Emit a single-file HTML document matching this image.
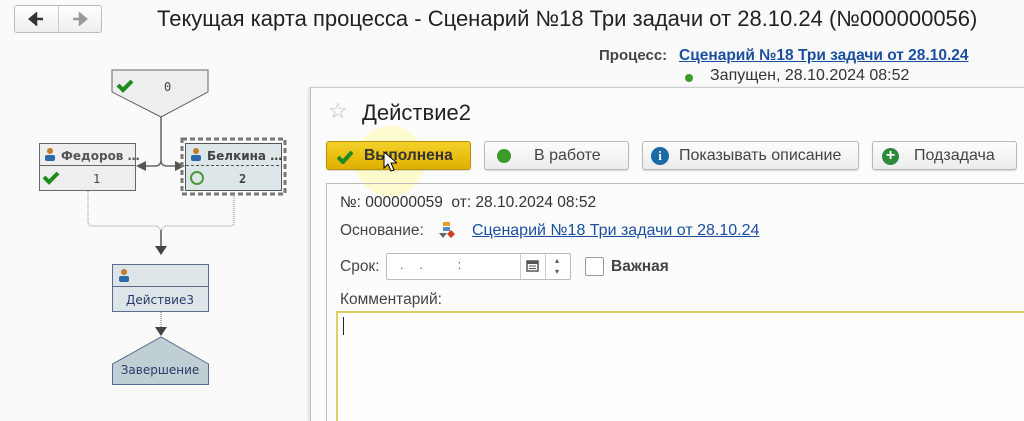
<!DOCTYPE html>
<html><head><meta charset="utf-8"><style>
html,body{margin:0;width:1024px;height:421px;overflow:hidden}
body{background:#fafafa;font-family:"Liberation Sans",sans-serif;position:relative;color:#333}
.a{position:absolute;white-space:nowrap}
.btn{position:absolute;height:29px;border:1px solid #b8b8b8;border-radius:3px;background:linear-gradient(#fdfdfd,#ececec);font-size:16px;color:#444;box-sizing:border-box;line-height:27px;box-shadow:0 1px 1px rgba(0,0,0,.15)}
</style></head><body>
<!-- nav -->
<div class="a" style="left:14px;top:5px;width:88px;height:28px;border:1px solid #bbb;border-radius:3px;background:linear-gradient(#fff,#eee);box-sizing:border-box"></div>
<div class="a" style="left:58px;top:6px;width:1px;height:26px;background:#ccc"></div>
<svg class="a" style="left:28px;top:12px" width="16" height="14"><path d="M15 7H5M8 2L2 7l6 5z" stroke="#333" stroke-width="2.5" fill="#333"/></svg>
<svg class="a" style="left:72px;top:12px" width="16" height="14"><path d="M1 7h10M8 2l6 5-6 5z" stroke="#999" stroke-width="2.5" fill="#999"/></svg>
<div class="a" style="left:157px;top:6px;font-size:22px;color:#222">Текущая карта процесса - Сценарий №18 Три задачи от 28.10.24 (№000000056)</div>
<div class="a" style="left:599px;top:47px;font-size:15px;font-weight:bold;color:#444">Процесс:</div>
<div class="a" style="left:679px;top:47px;font-size:15.5px;font-weight:bold;color:#1a4fa0;text-decoration:underline">Сценарий №18 Три задачи от 28.10.24</div>
<div class="a" style="left:685px;top:74px;width:8px;height:8px;border-radius:50%;background:#3a9a2a"></div>
<div class="a" style="left:710px;top:67px;font-size:16px;color:#333">Запущен, 28.10.2024 08:52</div>
<div class="a" style="left:590px;top:88px;width:434px;height:1px;background:#ccc"></div>

<!-- diagram -->
<svg class="a" style="left:0;top:0" width="310" height="421">
<path d="M112 70H208V92L161 117L112 92Z" fill="#eee" stroke="#666"/>
<path d="M118 85l5 5 9-9" stroke="#1d8a1d" stroke-width="4" fill="none"/>
<text x="164" y="91" font-family="DejaVu Sans Mono" font-size="12" fill="#444">0</text>
<path d="M161 117V160M161 160q0 6-6 6H145M161 160q0 6 6 6H178" stroke="#666" fill="none" stroke-width="1.5"/>
<path d="M136 166l10-5v10z" fill="#555"/><path d="M185 166l-10-5v10z" fill="#555"/>
<rect x="39.5" y="143.5" width="96" height="47" fill="#eee" stroke="#666"/>
<line x1="40" y1="165.5" x2="135" y2="165.5" stroke="#666"/>
<circle cx="50" cy="151" r="3" fill="#c47a2a"/><rect x="45" y="155" width="10" height="6" rx="2" fill="#2a6aa8"/>
<text x="61" y="160" font-family="DejaVu Sans" font-size="12" font-weight="bold" fill="#555">Федоров …</text>
<path d="M44 177l5 5 9-9" stroke="#1d8a1d" stroke-width="4" fill="none"/>
<text x="93" y="183" font-family="DejaVu Sans Mono" font-size="12" fill="#444">1</text>
<rect x="182" y="139" width="103" height="55" fill="none" stroke="#777" stroke-width="3" stroke-dasharray="5 3"/>
<rect x="185.5" y="143.5" width="96" height="47" fill="#dde6e8" stroke="#555"/>
<line x1="186" y1="165.5" x2="281" y2="165.5" stroke="#555" stroke-dasharray="3 2"/>
<circle cx="196" cy="151" r="3" fill="#c47a2a"/><rect x="191" y="155" width="10" height="6" rx="2" fill="#2a6aa8"/>
<text x="207" y="160" font-family="DejaVu Sans" font-size="12" font-weight="bold" fill="#444">Белкина …</text>
<circle cx="197" cy="178" r="6" fill="none" stroke="#4a9a3a" stroke-width="2"/>
<text x="239" y="183" font-family="DejaVu Sans Mono" font-size="12" font-weight="bold" fill="#444">2</text>
<path d="M88 191V222q0 4 4 4H157l4 4 4-4H230q4 0 4-4V194" stroke="#888" fill="none" stroke-dasharray="1 1"/>
<path d="M161 230V250" stroke="#555" stroke-width="1.5"/><path d="M155 246h12l-6 9z" fill="#444"/>
<rect x="112.5" y="264.5" width="96" height="47" fill="#dde5e8" stroke="#5a6a90"/>
<line x1="113" y1="286.5" x2="208" y2="286.5" stroke="#5a6a90"/>
<circle cx="124" cy="272" r="3" fill="#c47a2a"/><rect x="119" y="276" width="10" height="6" rx="2" fill="#2a6aa8"/>
<text x="160" y="304" text-anchor="middle" font-family="DejaVu Sans" font-size="12" fill="#2a3a6a">Действие3</text>
<path d="M161 312V330" stroke="#666" stroke-dasharray="1 1"/><path d="M155 327h12l-6 9z" fill="#444"/>
<path d="M112.5 384.5V364L161 337L208.5 364V384.5Z" fill="#bfcfd4" stroke="#5a6a90"/>
<text x="160" y="374" text-anchor="middle" font-family="DejaVu Sans" font-size="12" fill="#2a3a6a">Завершение</text>
</svg>

<!-- dialog -->
<div class="a" style="left:310px;top:87px;width:714px;height:334px;background:#fcfcfc;border-left:1px solid #bbb;border-top:1px solid #ccc;box-shadow:-2px 0 3px rgba(0,0,0,.1)"></div>
<div class="a" style="left:328px;top:98px;font-size:22px;color:#bbb">☆</div>
<div class="a" style="left:362px;top:100px;font-size:22px;color:#222">Действие2</div>
<div class="a" style="left:355px;top:126px;width:70px;height:70px;border-radius:50%;background:rgba(255,250,160,.5)"></div>
<div class="btn" style="left:326px;top:141px;width:145px;background:linear-gradient(#f3d12a,#e0b000);border-color:#b8920a;font-weight:bold;color:#333;font-size:15.5px"><svg style="position:absolute;left:10px;top:8px" width="16" height="14"><path d="M1 7l5 5 9-10" stroke="#1d8a1d" stroke-width="4" fill="none"/></svg><span style="position:absolute;left:37px">Выполнена</span></div>
<div class="btn" style="left:484px;top:141px;width:145px"><span style="position:absolute;left:12px;top:7px;width:14px;height:14px;border-radius:50%;background:#3a9a2a"></span><span style="position:absolute;left:49px">В работе</span></div>
<div class="btn" style="left:642px;top:141px;width:217px"><span style="position:absolute;left:8px;top:5px;width:18px;height:18px;border-radius:50%;background:#1a6aa8;color:#fff;font-weight:bold;font-size:13px;line-height:18px;text-align:center;font-family:'Liberation Serif',serif">i</span><span style="position:absolute;left:36px">Показывать описание</span></div>
<div class="btn" style="left:872px;top:141px;width:145px"><span style="position:absolute;left:9px;top:6px;width:17px;height:17px;border-radius:50%;background:#2e8a3a;color:#fff;font-weight:bold;font-size:16px;line-height:16px;text-align:center">+</span><span style="position:absolute;left:41px">Подзадача</span></div>
<div class="a" style="left:326px;top:183px;width:698px;height:238px;border-left:1px solid #bbb;border-top:1px solid #bbb"></div>
<div class="a" style="left:340px;top:194px;font-size:15.5px;color:#333">№: 000000059 &nbsp;от: 28.10.2024 08:52</div>
<div class="a" style="left:340px;top:222px;font-size:15.5px;color:#444">Основание:</div>
<svg class="a" style="left:437px;top:221px" width="22" height="20"><rect x="6" y="1" width="7" height="4" fill="#e0a030"/><rect x="6" y="6" width="7" height="4" fill="#5a8ac8"/><path d="M2 12h8l-4 5z" fill="#666"/><path d="M14 9l4 4-4 4-4-4z" fill="#d04020"/></svg>
<div class="a" style="left:472px;top:222px;font-size:16px;color:#1a4fa0;text-decoration:underline">Сценарий №18 Три задачи от 28.10.24</div>
<div class="a" style="left:340px;top:258px;font-size:15.5px;color:#444">Срок:</div>
<div class="a" style="left:386px;top:253px;width:185px;height:27px;border:1px solid #bbb;border-radius:2px;background:#fff;box-sizing:border-box"></div>
<div class="a" style="left:400px;top:257px;font-size:13px;color:#666;letter-spacing:6px">. . &nbsp;&nbsp;:</div>
<div class="a" style="left:520px;top:254px;width:1px;height:25px;background:#ccc"></div>
<div class="a" style="left:545px;top:254px;width:1px;height:25px;background:#ccc"></div>
<svg class="a" style="left:526px;top:259px" width="14" height="14"><rect x="1" y="2" width="11" height="10" fill="none" stroke="#555" stroke-width="1.5"/><rect x="1" y="2" width="11" height="3" fill="#555"/><path d="M3 7h7M3 9.5h7" stroke="#555"/></svg>
<div class="a" style="left:555px;top:255px;font-size:8px;color:#555;line-height:11px">▴<br>▾</div>
<div class="a" style="left:585px;top:257px;width:17px;height:17px;border:1px solid #999;border-radius:2px;background:#fff"></div>
<div class="a" style="left:611px;top:258px;font-size:15.5px;font-weight:bold;color:#444">Важная</div>
<div class="a" style="left:340px;top:291px;font-size:15.5px;color:#444">Комментарий:</div>
<div class="a" style="left:336px;top:311px;width:700px;height:120px;border:2px solid #e0d060;background:#fefefe;box-sizing:border-box"></div>
<div class="a" style="left:343px;top:317px;width:1px;height:18px;background:#222"></div>
<svg class="a" style="left:383px;top:151px" width="14" height="22"><path d="M1 1v16l4-4 3 7 3-1-3-7h6z" fill="#fff" stroke="#000"/></svg>
</body></html>
